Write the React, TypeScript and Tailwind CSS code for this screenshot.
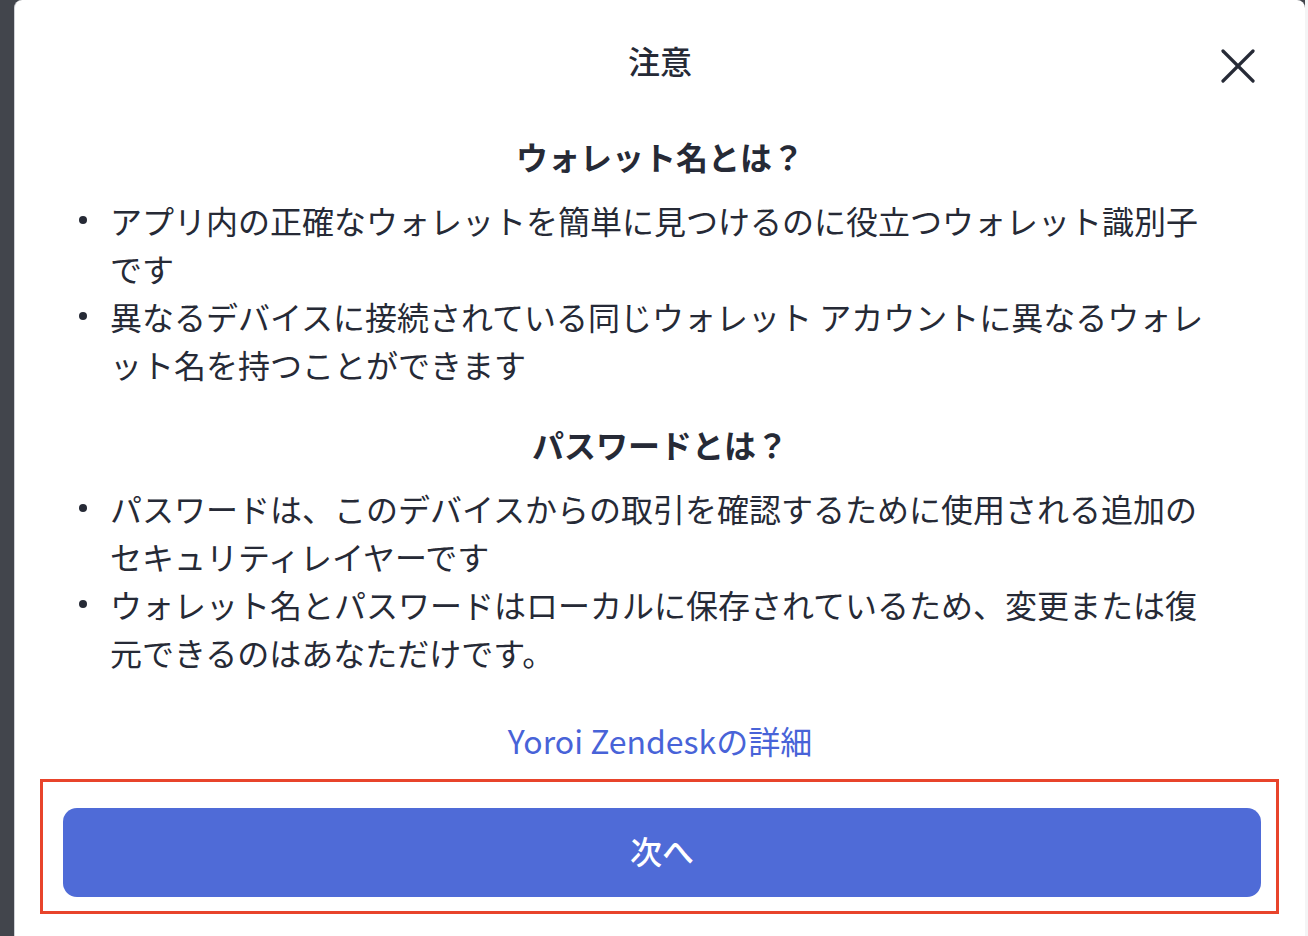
import React from "react";

const font = "font-['Noto_Sans_CJK_JP','Noto_Sans',sans-serif]";

const CloseIcon = () => (
    <svg width="34" height="34" viewBox="0 0 34 34" fill="none" stroke="#262a36" strokeWidth="3.2" strokeLinecap="round">
        <path d="M2 2 32 32"/>
        <path d="M32 2 2 32"/>
    </svg>
);

const Bullet = ({children}: { children: React.ReactNode }) => (
    <li className="flex">
        <span className="flex h-[48px] w-[31px] shrink-0 items-center">
            <span className="h-[8px] w-[8px] rounded-full bg-[#262a36]"/>
        </span>
        <span className="flex-1">{children}</span>
    </li>
);

export default function App() {
    return (
        <div lang="ja" className={`flex h-[936px] w-full bg-[#42454c] pl-[14px] text-[#262a36] ${font}`}>
            <div className="relative flex flex-1 flex-col rounded-t-[8px] border-l border-[#cfd1d6] bg-white">
                <button className="absolute right-[50px] top-[49px]">
                    <CloseIcon/>
                </button>

                <div className="px-[48px] pt-[36px]">
                    <h1 className="text-center text-[32px] font-medium leading-[48px]">注意</h1>

                    <h2 className="mt-[48px] text-center text-[32px] font-bold leading-[48px]">ウォレット名とは？</h2>
                    <ul className="mt-[16px] pl-[16px] pr-[40px] text-[32px] leading-[48px]">
                        <Bullet>アプリ内の正確なウォレットを簡単に見つけるのに役立つウォレット識別子です</Bullet>
                        <Bullet>異なるデバイスに接続されている同じウォレット アカウントに異なるウォレット名を持つことができます</Bullet>
                    </ul>

                    <h2 className="mt-[32px] text-center text-[32px] font-bold leading-[48px]">パスワードとは？</h2>
                    <ul className="mt-[16px] pl-[16px] pr-[40px] text-[32px] leading-[48px]">
                        <Bullet>パスワードは、このデバイスからの取引を確認するために使用される追加のセキュリティレイヤーです</Bullet>
                        <Bullet>ウォレット名とパスワードはローカルに保存されているため、変更または復元できるのはあなただけです。</Bullet>
                    </ul>

                    <p className="mt-[40px] text-center text-[32px] leading-[48px] text-[#4863d8]">
                        <a href="#">Yoroi Zendeskの詳細</a>
                    </p>
                </div>

                <div className="ml-[25px] mr-[26px] mt-[15px] border-[3px] border-[#e8442b] pb-[14px] pl-[20px] pr-[15px] pt-[26px]">
                    <button className="flex h-[89px] w-full items-center justify-center rounded-[14px] bg-[#4f6bd7] pb-[5px] text-[32px] font-medium text-white">
                        次へ
                    </button>
                </div>
            </div>
            <div className="w-[3px] shrink-0 bg-[#f4f4f5]"/>
        </div>
    );
}
